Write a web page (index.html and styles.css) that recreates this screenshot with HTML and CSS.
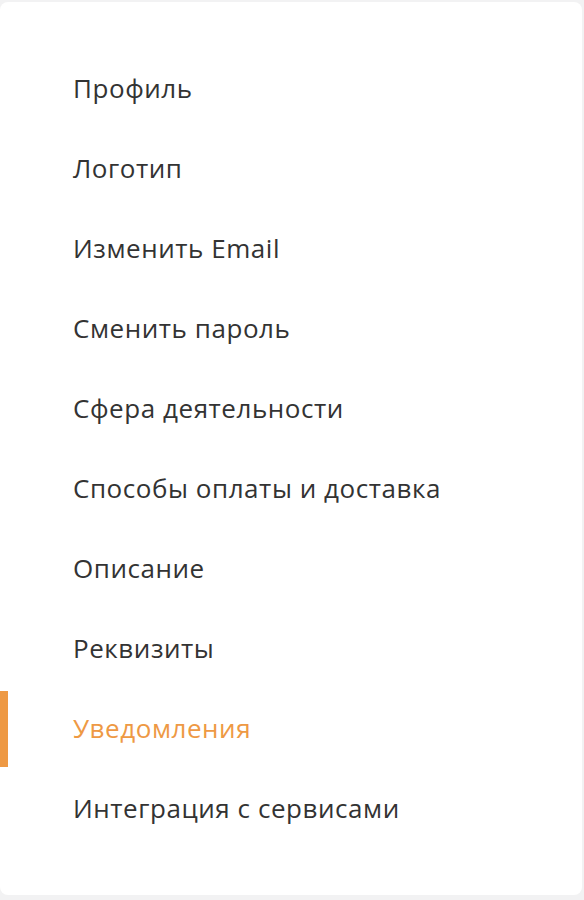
FILE: index.html
```html
<!DOCTYPE html>
<html lang="ru">
<head>
<meta charset="utf-8">
<link rel="stylesheet" href="styles.css">
</head>
<body>
<nav class="card">
  <ul class="menu">
    <li class="item"><a href="#">Профиль</a></li>
    <li class="item"><a href="#">Логотип</a></li>
    <li class="item"><a href="#">Изменить Email</a></li>
    <li class="item"><a href="#">Сменить пароль</a></li>
    <li class="item"><a href="#">Сфера деятельности</a></li>
    <li class="item"><a href="#">Способы оплаты и доставка</a></li>
    <li class="item"><a href="#">Описание</a></li>
    <li class="item"><a href="#">Реквизиты</a></li>
    <li class="item active"><a href="#">Уведомления</a></li>
    <li class="item"><a href="#">Интеграция с сервисами</a></li>
  </ul>
</nav>
</body>
</html>
```
FILE: styles.css
```css
html, body {
  margin: 0;
  padding: 0;
  background: #f2f2f3;
}
body {
  padding-top: 2px;
  width: 582px;
  font-family: "Open Sans", "Noto Sans", sans-serif;
}
.card {
  background: #ffffff;
  border-radius: 8px;
  height: 893px;
  box-sizing: border-box;
  padding-top: 49px;
}
.menu {
  list-style: none;
  margin: 0;
  padding: 0;
  display: flex;
  flex-direction: column;
  gap: 4px;
}
.item {
  height: 76px;
  box-sizing: border-box;
  display: flex;
  align-items: center;
  padding-left: 73px;
  padding-bottom: 3px;
  position: relative;
}
.item a {
  color: #333333;
  text-decoration: none;
  font-size: 26px;
  letter-spacing: 0.55px;
  line-height: 1;
}
.item.active a {
  color: #ee9944;
}
.item.active::before {
  content: "";
  position: absolute;
  left: 0;
  top: 0;
  bottom: 0;
  width: 8px;
  background: #ee9944;
}
```
